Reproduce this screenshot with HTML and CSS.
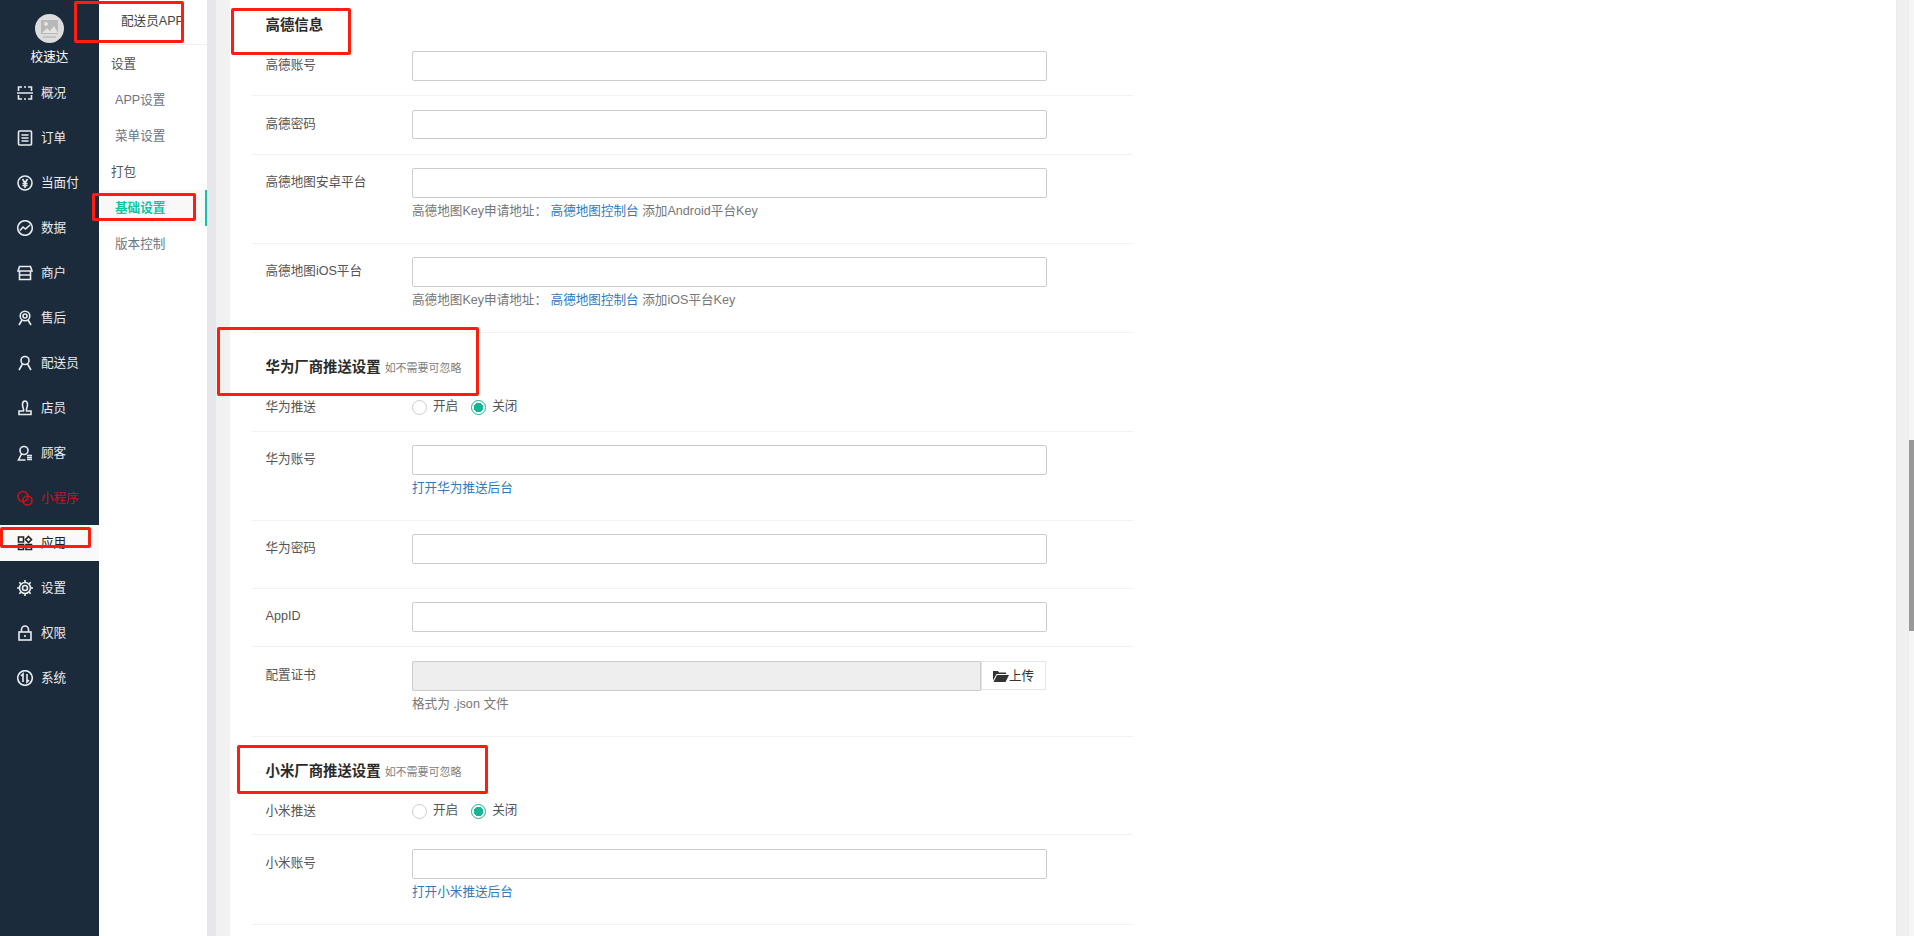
FILE: index.html
```html
<!DOCTYPE html>
<html lang="zh">
<head>
<meta charset="utf-8">
<title>配送员APP 基础设置</title>
<link rel="stylesheet" href="styles.css">
</head>
<body>
<div class="app">
  <nav class="rail">
    <div class="brand">
      <div class="avatar">
        <svg viewBox="0 0 29 29" width="29" height="29"><rect x="6" y="6" width="17" height="14" fill="#b8b8b8"/><circle cx="11" cy="10" r="2" fill="#e4e4e4"/><path d="M7 19l5-5 3 3 4-5 4 7z" fill="#e4e4e4"/><rect x="8" y="22" width="13" height="2" fill="#c4c4c4"/></svg>
      </div>
      <div class="brand-name">校速达</div>
    </div>
    <a class="rail-item"><svg class="ico" viewBox="0 0 16 16"><path d="M5 2H1.500v4M11 2h3.500v4M1.500 10v4H5M14.500 10v4H11M0 8h16M7 2h2M7 14h2"/></svg>概况</a>
    <a class="rail-item"><svg class="ico" viewBox="0 0 16 16"><rect x="1.500" y="1" width="13" height="14" rx="1"/><path d="M4.500 5h7M4.500 8h7M4.500 11h7"/></svg>订单</a>
    <a class="rail-item"><svg class="ico" viewBox="0 0 16 16"><circle cx="8" cy="8" r="7"/><path d="M5.500 4l2.500 4 2.500-4M8 8v5M5.500 8.500h5M5.500 10.500h5"/></svg>当面付</a>
    <a class="rail-item"><svg class="ico" viewBox="0 0 16 16"><circle cx="8" cy="8" r="7.300"/><path d="M3 10.500l3-3.500 2.500 2L13 5"/></svg>数据</a>
    <a class="rail-item"><svg class="ico" viewBox="0 0 16 16"><path d="M2.500 1.500h11l1.500 4.500H1zM2.500 6v8.500h11V6M2.500 10h11M1 6h14"/></svg>商户</a>
    <a class="rail-item"><svg class="ico" viewBox="0 0 16 16"><circle cx="8" cy="6" r="4.800"/><circle cx="8" cy="6" r="2"/><path d="M5 10l-3 5M11 10l3 5"/></svg>售后</a>
    <a class="rail-item"><svg class="ico" viewBox="0 0 16 16"><circle cx="8" cy="5.500" r="4"/><path d="M5.500 9l-3.500 6M10.500 9l3.500 6"/></svg>配送员</a>
    <a class="rail-item"><svg class="ico" viewBox="0 0 16 16"><path d="M5.500 4.500a2.500 3.500 0 0 1 5 0c0 3-1.500 4-1 6.500h4.500v3.500H2V11h4.500c.5-2.500-1-3.500-1-6.500z"/></svg>店员</a>
    <a class="rail-item"><svg class="ico" viewBox="0 0 16 16"><circle cx="7" cy="5.500" r="4"/><path d="M4.500 9L1.500 15h7M10 10.500h5M10 12.500h5M10 14.500h5"/></svg>顾客</a>
    <a class="rail-item rail-item--alert"><svg class="ico" viewBox="0 0 16 16"><circle cx="6" cy="6.500" r="5"/><circle cx="10.500" cy="10.500" r="4.500"/><path d="M9 10.500h.5M11.500 10.500h.5"/></svg>小程序</a>
    <a class="rail-item rail-item--active"><svg class="ico" viewBox="0 0 16 16"><path d="M1.500 2h5v5h-5zM1.500 9.500h5v5h-5zM9 9.500h5.500v5H9z"/><path d="M11.500 1.500l3 3-3 3-3-3z"/></svg>应用</a>
    <a class="rail-item"><svg class="ico" viewBox="0 0 16 16"><circle cx="8" cy="8" r="2.500"/><circle cx="8" cy="8" r="5.500"/><path d="M8 0v2.500M8 13.500V16M0 8h2.500M13.500 8H16M2.300 2.300l1.800 1.800M11.900 11.900l1.800 1.800M2.300 13.700l1.800-1.800M11.900 4.100l1.800-1.800"/></svg>设置</a>
    <a class="rail-item"><svg class="ico" viewBox="0 0 16 16"><rect x="2" y="7" width="12" height="8"/><path d="M4.500 7V4.500a3.500 3.500 0 0 1 7 0V7M8 10v2"/></svg>权限</a>
    <a class="rail-item"><svg class="ico" viewBox="0 0 16 16"><circle cx="8" cy="8" r="7.300"/><path d="M6 12V4L4 6M10 4v8l2-2"/></svg>系统</a>
  </nav>

  <aside class="subnav">
    <div class="subnav-head">配送员APP</div>
    <ul class="subnav-list">
      <li class="subnav-group">设置</li>
      <li class="subnav-link">APP设置</li>
      <li class="subnav-link">菜单设置</li>
      <li class="subnav-group">打包</li>
      <li class="subnav-link subnav-link--active">基础设置</li>
      <li class="subnav-link">版本控制</li>
    </ul>
  </aside>
  <div class="gutter-a"></div>
  <div class="gutter-b"></div>

  <main class="content">
    <form class="form">
      <h3 class="section section--first">高德信息</h3>
      <div class="row row--snug"><label class="label">高德账号</label><div class="field"><input class="input" type="text"></div></div>
      <div class="row row--short"><label class="label">高德密码</label><div class="field"><input class="input input--short" type="text"></div></div>
      <div class="row"><label class="label">高德地图安卓平台</label><div class="field"><input class="input" type="text"><p class="help">高德地图Key申请地址： <a class="link">高德地图控制台</a> 添加Android平台Key</p></div></div>
      <div class="row"><label class="label">高德地图iOS平台</label><div class="field"><input class="input" type="text"><p class="help">高德地图Key申请地址： <a class="link">高德地图控制台</a> 添加iOS平台Key</p></div></div>

      <h3 class="section">华为厂商推送设置 <small class="section-note">如不需要可忽略</small></h3>
      <div class="row row--radio"><label class="label">华为推送</label><div class="radios"><span class="radio"></span><span class="radio-text">开启</span><span class="radio radio--on"></span><span class="radio-text">关闭</span></div></div>
      <div class="row"><label class="label">华为账号</label><div class="field"><input class="input" type="text"><p class="help"><a class="link">打开华为推送后台</a></p></div></div>
      <div class="row row--loose"><label class="label">华为密码</label><div class="field"><input class="input" type="text"></div></div>
      <div class="row row--snug"><label class="label">AppID</label><div class="field"><input class="input" type="text"></div></div>
      <div class="row row--top14"><label class="label">配置证书</label><div class="field">
        <div class="upload"><input class="input input--disabled" type="text" disabled><button class="upload-btn" type="button"><svg class="folder" viewBox="0 0 16 12"><path d="M0 1h5l1 1.500h7V4H3.500L0 10.500z"/><path d="M4 5h12l-3.500 7H.500z"/></svg>上传</button></div>
        <p class="help">格式为 .json 文件</p></div></div>

      <h3 class="section">小米厂商推送设置 <small class="section-note">如不需要可忽略</small></h3>
      <div class="row row--radio row--radio-b"><label class="label">小米推送</label><div class="radios"><span class="radio"></span><span class="radio-text">开启</span><span class="radio radio--on"></span><span class="radio-text">关闭</span></div></div>
      <div class="row row--top14"><label class="label">小米账号</label><div class="field"><input class="input" type="text"><p class="help"><a class="link">打开小米推送后台</a></p></div></div>
    </form>
  </main>

  <div class="scrollbar"><div class="scrollbar-track"><div class="scrollbar-thumb"></div></div></div>
</div>

<div class="mark mark--head"></div>
<div class="mark mark--active"></div>
<div class="mark mark--gaode"></div>
<div class="mark mark--huawei"></div>
<div class="mark mark--xiaomi"></div>
<div class="mark mark--app"></div>
</body>
</html>
```

FILE: styles.css
```css
* { box-sizing: border-box; }
html, body { margin: 0; height: 100%; overflow: hidden; }
body {
  font-family: "Liberation Sans", "Noto Sans CJK SC", sans-serif;
  font-size: 12.6px;
  line-height: 18px;
  color: #555;
  background: #fff;
}
.app { display: flex; height: 936px; overflow: hidden; }

/* left rail */
.rail { width: 99px; flex: none; background: #1c2b3b; color: #e9ecef; }
.brand { height: 75px; padding-top: 14px; text-align: center; }
.avatar {
  width: 29px; height: 29px; margin: 0 auto; border-radius: 50%;
  background: #dcdcdc; overflow: hidden;
}
.avatar svg { display: block; }
.brand-name { margin-top: 5px; line-height: 18px; color: #fff; }
.rail-item {
  display: flex; align-items: center; gap: 8px;
  height: 36px; margin-bottom: 9px; padding-left: 17px;
  color: #e9ecef;
}
.ico {
  width: 16px; height: 16px; flex: none;
  fill: none; stroke: currentColor; stroke-width: 1.6;
}
.rail-item--alert { color: #c9111c; }
.rail-item--active { background: #f9f9f9; color: #222; }

/* second column */
.subnav { width: 108px; flex: none; background: #fff; overflow: hidden; }
.subnav-head {
  height: 45px; padding: 12px 0 0 22px; border-bottom: 1px solid #f0f0f0;
  white-space: nowrap; color: #444; overflow: hidden;
}
.subnav-list { list-style: none; margin: 1px 0 0; padding: 0; }
.subnav-group { height: 36px; line-height: 37px; padding-left: 12px; color: #555; }
.subnav-link { height: 36px; line-height: 37px; padding-left: 16px; color: #6d7583; }
.subnav-link--active {
  background: #f8f8f8; color: #10c4a4; font-weight: 700;
  border-right: 2px solid #10c4a4;
}
.gutter-a { width: 9px; flex: none; background: #e6e7eb; }
.gutter-b { width: 14px; flex: none; background: #f1f1f1; }

/* main */
.content { flex: 1; min-width: 0; background: #fff; padding-left: 22px; }
.form { width: 881px; }
.section {
  margin: 0; height: 60px; padding: 25px 0 0 13.5px;
  font-size: 14.4px; line-height: 18px; font-weight: 700; color: #2b2b2b;
}
.section--first { height: 38px; padding-top: 16px; }
.section-note { font-size: 11px; font-weight: 400; color: #808080; }
.row {
  display: flex; align-items: flex-start;
  padding: 13px 0 14px 13.5px;
  border-bottom: 1px solid #f1f3f3;
}
.row--short { padding: 14px 0 15px 13.5px; }
.row--loose { padding-bottom: 24px; }
.row--top14 { padding-top: 14px; }
.row--radio { height: 39px; padding: 5px 0 0 13.5px; }
.row--radio-b { height: 38px; }
.label { width: 146.5px; flex: none; margin-top: 5px; color: #555; }
.row--radio .label { margin-top: 0; }
.field { width: 635px; }
.input {
  display: block; width: 100%; height: 30px; padding: 0 8px; margin: 0;
  border: 1px solid #ccc; border-radius: 2px; background: #fff; outline: 0;
}
.input--short { height: 29px; }
.input--disabled { flex: 1; min-width: 0; background: #eee; border-radius: 2px 0 0 2px; }
.help { margin: 4px 0 9px; color: #777; line-height: 18px; height: 18px; white-space: nowrap; }
.link { color: #337ab7; }
.upload { display: flex; padding-right: 1px; }
.upload-btn {
  display: flex; align-items: center; justify-content: center;
  width: 65px; height: 29px; padding: 0; flex: none;
  border: 1px solid #e6e6e6; background: #fff; color: #333;
  font: inherit;
}
.folder { width: 16px; height: 12px; fill: #333; flex: none; }

/* radios */
.radios { display: flex; align-items: center; height: 18px; margin-top: -1px; }
.radio {
  width: 15px; height: 15px; flex: none; border-radius: 50%;
  border: 1px solid #ccc; background: #fff; margin-top: 3px;
}
.radio--on {
  border-color: #1ab394;
  background: radial-gradient(circle, #1ab394 0 4.500px, #fff 5px);
}
.radio-text { margin: -1px 13px 0 6px; color: #555; }

/* scrollbar */
.scrollbar { width: 18px; flex: none; background: #f0f0f0; border-left: 1px solid #ebebeb; display: flex; justify-content: flex-end; }
.scrollbar-track { width: 5px; height: 100%; background: #f6f6f6; }
.scrollbar-thumb { height: 191px; margin-top: 440px; background: #999; }

/* red annotation boxes drawn over the screenshot */
.mark { position: absolute; border: 3px solid #ff1c10; border-radius: 2px; }
.mark--head { left: 74px; top: 1px; width: 110px; height: 42px; }
.mark--active { left: 92px; top: 193px; width: 104px; height: 28px; }
.mark--gaode { left: 231px; top: 8px; width: 120px; height: 47px; }
.mark--huawei { left: 217px; top: 327px; width: 262px; height: 69px; }
.mark--xiaomi { left: 237px; top: 745px; width: 251px; height: 49px; }
.mark--app { left: 0; top: 527px; width: 91px; height: 21px; }
```
